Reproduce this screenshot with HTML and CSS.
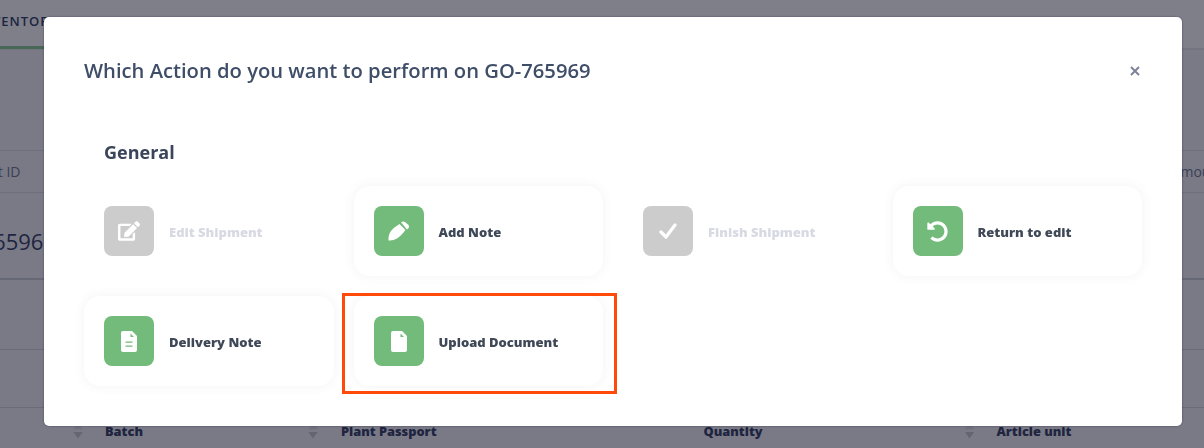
FILE: index.html
```html
<!DOCTYPE html>
<html lang="en">
<head>
  <meta charset="UTF-8" />
  <title>Shipment actions</title>
  <link rel="stylesheet" href="styles.css">
</head>
<body>
  <div class="page">
    <nav class="tabs">
      <a class="tab active">INVENTORY</a>
      <a class="tab">PACKLIST</a>
      <a class="tab">PRODUCT PASS</a>
      <a class="tab">DATA</a>
    </nav>

    <div class="row row-head">
      <span class="head-left">Shipment ID</span>
      <span class="head-right">Amount</span>
    </div>
    <div class="row row-main">
      <span class="shipment-no">GO-765969</span>
    </div>
    <div class="row row-empty"></div>
    <div class="row row-spacer"></div>

    <div class="sub-head">
      <span class="sort sort-batch"></span>
      <span class="sub-batch">Batch</span>
      <span class="sort sort-plant"></span>
      <span class="sub-plant">Plant Passport</span>
      <span class="sub-qty">Quantity</span>
      <span class="sort sort-unit"></span>
      <span class="sub-unit">Article unit</span>
    </div>
  </div>

  <div class="overlay">
    <div class="modal">
      <div class="modal-header">
        <h2>Which Action do you want to perform on GO-765969</h2>
        <button class="close">
          <svg viewBox="0 0 10 10" width="10" height="10"><path d="M1 1l8 8M9 1l-8 8" /></svg>
        </button>
      </div>

      <div class="modal-body">
        <h3>General</h3>
        <div class="actions">
          <div class="action disabled">
            <span class="tile">
              <svg viewBox="0 0 576 512" width="22" height="20"><path d="M402.6 83.2l90.2 90.2c3.8 3.8 3.8 10 0 13.8L274.4 405.6l-92.8 10.3c-12.4 1.4-22.9-9.1-21.5-21.5l10.3-92.8L388.8 83.2c3.8-3.8 10-3.8 13.8 0zm162-22.9l-48.8-48.8c-15.2-15.2-39.9-15.2-55.2 0l-35.4 35.4c-3.8 3.8-3.8 10 0 13.8l90.2 90.2c3.8 3.8 10 3.8 13.8 0l35.4-35.4c15.2-15.3 15.2-40 0-55.2zM384 346.2V448H64V128h229.8c3.2 0 6.2-1.3 8.5-3.5l40-40c7.6-7.6 2.2-20.5-8.5-20.5H48C21.5 64 0 85.5 0 112v352c0 26.5 21.5 48 48 48h352c26.5 0 48-21.5 48-48V306.2c0-10.7-12.9-16-20.5-8.5l-40 40c-2.2 2.3-3.5 5.3-3.5 8.5z" /></svg>
            </span>
            <span class="label">Edit Shipment</span>
          </div>
          <div class="action">
            <span class="tile">
              <svg viewBox="0 0 22 20" width="22" height="20">
                <path d="M0.5 19.5Q0 14 3 10Q5 7 11.5 3L17.5 9Q13 15 9 17.5Q5 20 0.5 19.5Z" />
                <path d="M13 1.3Q15 0 17 1L20 3.5Q22 5.5 20.2 7.5L19 8.5Z" />
              </svg>
            </span>
            <span class="label">Add Note</span>
          </div>
          <div class="action disabled">
            <span class="tile">
              <svg viewBox="0 0 18 16" width="18" height="16"><path class="line" d="M2 9l5 5L16 2" /></svg>
            </span>
            <span class="label">Finish Shipment</span>
          </div>
          <div class="action">
            <span class="tile">
              <svg viewBox="0 0 512 512" width="21" height="21"><path d="M255.545 8c-66.269.119-126.438 26.233-170.86 68.685L48.971 40.971C33.851 25.851 8 36.559 8 57.941V192c0 13.255 10.745 24 24 24h134.059c21.382 0 32.09-25.851 16.971-40.971l-41.75-41.75c30.864-28.899 70.801-44.907 113.23-45.273 92.398-.798 170.283 73.977 169.484 169.442C423.236 348.009 349.816 424 256 424c-41.127 0-79.997-14.678-110.63-41.556-4.743-4.161-11.906-3.908-16.368.553L89.34 422.659c-4.872 4.872-4.631 12.815.482 17.433C133.798 479.813 192.074 504 256 504c136.966 0 247.999-111.033 248-247.998C504.001 119.193 392.354 7.755 255.545 8z" /></svg>
            </span>
            <span class="label">Return to edit</span>
          </div>
          <div class="action">
            <span class="tile">
              <svg viewBox="0 0 16 21" width="16" height="21">
                <path d="M2 0h9l5 5v14a2 2 0 0 1-2 2H2a2 2 0 0 1-2-2V2a2 2 0 0 1 2-2z" />
                <path class="ink" d="M9.5 2.5v3.5H13zM4.5 10.5h7v1.2h-7zM4.5 14.5h7v1.2h-7z" />
              </svg>
            </span>
            <span class="label">Delivery Note</span>
          </div>
          <div class="action marked">
            <span class="tile">
              <svg viewBox="0 0 16 21" width="16" height="21">
                <path d="M2 0h9l5 5v14a2 2 0 0 1-2 2H2a2 2 0 0 1-2-2V2a2 2 0 0 1 2-2z" />
                <path class="ink" d="M9.5 2.5v3.5H13z" />
              </svg>
            </span>
            <span class="label">Upload Document</span>
          </div>
        </div>
      </div>
    </div>
  </div>
</body>
</html>
```

FILE: styles.css
```css
html, body {
  height: 100%;
}

body {
  margin: 0;
  height: 448px;
  overflow: hidden;
  font-family: "Open Sans", "Noto Sans", sans-serif;
  background: #f4f5f9;
  color: #3f4a6c;
}

.page {
  height: 448px;
  overflow: hidden;
}

.tabs {
  display: flex;
  height: 50px;
  box-sizing: border-box;
  background: #fff;
  border-bottom: 2px solid #e8e9ef;
  font-size: 13px;
  font-weight: 600;
  letter-spacing: 1px;
  margin-left: -44px;
  white-space: nowrap;
}

.tab {
  height: 49px;
  box-sizing: border-box;
  padding: 12px 0 0 20px;
  margin-right: 15px;
  color: #3a4a70;
}

.tab.active {
  border-bottom: 3px solid #8ed19a;
  padding-right: 6px;
  margin-right: 0;
}

.row {
  display: flex;
  box-sizing: border-box;
  align-items: center;
  border-bottom: 1px solid #dcdde4;
}

.row-head {
  margin-top: 100px;
  height: 43px;
  border-top: 1px solid #dcdde4;
  justify-content: space-between;
  font-size: 14px;
  color: #76809c;
}

.head-left {
  margin-left: -60px;
}

.head-right {
  margin-right: -20px;
}

.row-main {
  height: 85px;
  padding-top: 10px;
  justify-content: flex-end;
  width: 56px;
  white-space: nowrap;
  font-size: 22px;
  color: #3f4a6c;
  border-bottom: none;
}

.row-empty {
  height: 72px;
  border-top: 2px solid #cfd0d9;
  border-bottom: 1px solid #d4d5dc;
}

.row-spacer {
  height: 58px;
  border-bottom: 1px solid #d4d5dc;
}

.sub-head {
  display: flex;
  align-items: center;
  height: 33px;
  padding-top: 6px;
  font-size: 12.8px;
  font-weight: 800;
  color: #3f4a6c;
  white-space: nowrap;
}

.sort {
  width: 10px;
  height: 16px;
  background:
    linear-gradient(to bottom, #e0e1e8 0 7px, transparent 7px 9px, #c8c9d2 9px);
  clip-path: polygon(50% 0, 100% 7px, 0 7px, 50% 0, 0 9px, 100% 9px, 50% 100%, 0 9px);
}

.sort-batch { margin-left: 73px; }
.sub-batch { margin-left: 22px; }
.sort-plant { margin-left: 165px; }
.sub-plant { margin-left: 23px; }
.sub-qty { margin-left: 267px; }
.sort-unit { margin-left: 202px; }
.sub-unit { margin-left: 22px; }

.overlay {
  position: fixed;
  inset: 0;
  padding: 17px 22px 0 44px;
  background: rgba(0, 0, 20, 0.5);
}

.modal {
  height: 409px;
  box-sizing: border-box;
  background: #fff;
  border-radius: 5px;
  box-shadow: 0 0 2px rgba(30, 30, 60, 0.6);
}

.modal-header {
  display: flex;
  justify-content: space-between;
  align-items: center;
  height: 106px;
  padding: 0 42px 0 40px;
  box-sizing: border-box;
}

.modal-header h2 {
  margin: 0;
  font-size: 20.2px;
  font-weight: 600;
  color: #3f4e68;
}

.close {
  display: flex;
  margin-top: 2px;
  padding: 0;
  background: transparent;
  border: none;
}

.close svg path {
  fill: none;
  stroke: #7e8299;
  stroke-width: 2;
}

.modal-body {
  padding: 0 40px;
}

.modal-body h3 {
  margin: 16px 0 21px 20px;
  font-size: 18px;
  line-height: 26px;
  font-weight: 700;
  color: #3a4559;
}

.actions {
  display: grid;
  grid-template-columns: repeat(4, 1fr);
  gap: 20px;
}

.action {
  position: relative;
  display: flex;
  align-items: center;
  gap: 15px;
  height: 90px;
  padding: 0 20px;
  box-sizing: border-box;
  border-radius: 16px;
  background: #fff;
  box-shadow: 0 0 12px rgba(80, 80, 110, 0.07);
}

.action.disabled {
  box-shadow: none;
}

.tile {
  display: flex;
  align-items: center;
  justify-content: center;
  width: 50px;
  height: 50px;
  border-radius: 8px;
  background: #73bb7a;
}

.tile svg path {
  fill: #fff;
}

.tile svg path.ink {
  fill: #73bb7a;
}

.tile svg path.line {
  fill: none;
  stroke: #fff;
  stroke-width: 3.2;
  stroke-linecap: round;
  stroke-linejoin: round;
}

.label {
  padding-top: 2px;
  font-size: 13px;
  font-weight: 800;
  color: #3f4857;
}

.disabled .tile {
  background: #cccccc;
}

.disabled .label {
  color: #d8dae3;
}

/* orange annotation round the last action */
.marked::after {
  content: "";
  position: absolute;
  top: -3px;
  left: -12px;
  right: -14px;
  bottom: -8px;
  border: 3px solid #ff4a0a;
}
```
